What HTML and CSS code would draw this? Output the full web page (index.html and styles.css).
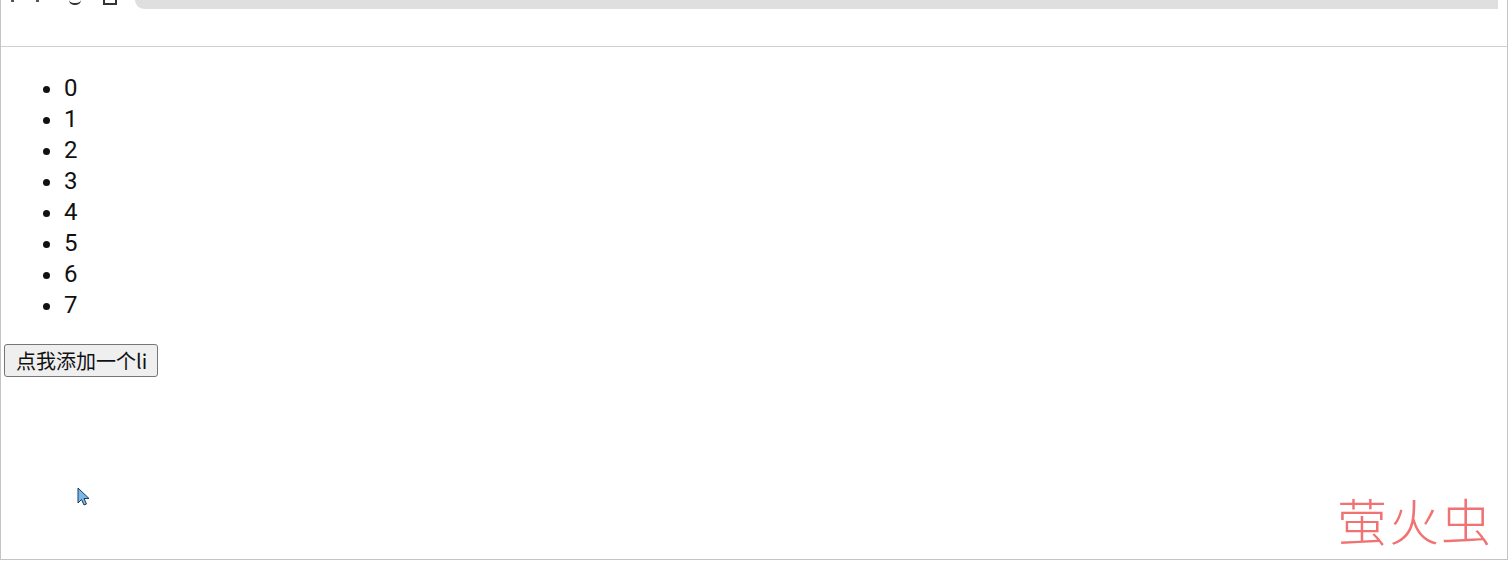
FILE: index.html
```html
<!DOCTYPE html>
<html lang="zh">

<head>
    <meta charset="UTF-8">
    <meta name="viewport" content="width=device-width, initial-scale=1.0">
    <title>添加li</title>
    <link rel="stylesheet" href="styles.css">
</head>

<body>
    <div class="window">
        <!-- barra del navegador, cortada arriba -->
        <div class="toolbar">
            <div class="nav-icons">
                <span class="dot"></span>
                <span class="dot"></span>
                <span class="reload"></span>
                <span class="square"></span>
            </div>
            <div class="address"></div>
        </div>

        <div class="page">
            <ul id="list">
                <li>0</li>
                <li>1</li>
                <li>2</li>
                <li>3</li>
                <li>4</li>
                <li>5</li>
                <li>6</li>
                <li>7</li>
            </ul>
            <button id="addBtn">点我添加一个li</button>
        </div>

        <svg class="cursor" width="14" height="20" viewBox="0 0 14 20">
            <path d="M1 1 L1 16 L4.5 12.5 L7 18 L9.5 17 L7 11.5 L12 11.5 Z" fill="#7ab8ea" stroke="#1d3b5a" stroke-width="1" stroke-linejoin="round" />
        </svg>

        <div class="watermark">萤火虫</div>
    </div>

    <script>
        document.getElementById('addBtn').addEventListener('click', function () {
            const list = document.getElementById('list');
            const li = document.createElement('li');
            li.textContent = list.children.length;
            list.appendChild(li);
        });
    </script>
</body>

</html>
```

FILE: styles.css
```css
body {
    margin: 0;
    padding: 0;
    background-color: white;
    font-family: "Noto Sans CJK SC", "Noto Sans", sans-serif;
}

.window {
    position: relative;
    height: 559px;
    width: 1506px;
    border-left: 1px solid #c4c4c4;
    border-right: 1px solid #c4c4c4;
    border-bottom: 1px solid #c4c4c4;
    overflow: hidden;
}

.toolbar {
    height: 46px;
    border-bottom: 1px solid #cfcfcf;
    display: flex;
    align-items: flex-start;
}

.nav-icons {
    width: 134px;
    display: flex;
    align-items: flex-start;
    gap: 22px;
    padding-left: 10px;
    box-sizing: border-box;
}

.dot {
    width: 3px;
    height: 2px;
    background-color: #555;
}

.reload {
    width: 12px;
    height: 3px;
    border-bottom: 2px solid #333;
    border-radius: 0 0 6px 6px;
    margin-left: 8px;
}

.square {
    width: 10px;
    height: 3px;
    border: 2px solid #333;
    border-top: none;
}

.address {
    flex: 1;
    height: 9px;
    background-color: #dfdfdf;
    border-radius: 0 0 0 12px;
    margin-right: 9px;
}

.page {
    padding: 26px 3px 0;
}

ul {
    margin: 0 0 23px;
    padding-left: 60px;
    font-family: Roboto, "Noto Sans", sans-serif;
    font-size: 24px;
    line-height: 31px;
    color: #111;
}

button {
    font-family: "Noto Sans CJK SC", sans-serif;
    font-size: 20px;
    line-height: 25px;
    padding: 3px 10px 3px 11px;
    color: #111;
    background-color: #efefef;
    border: 1px solid #767676;
    border-radius: 3px;
}

.cursor {
    position: absolute;
    left: 76px;
    top: 487px;
}

.watermark {
    position: absolute;
    right: 14px;
    bottom: 12px;
    font-size: 50px;
    font-weight: 300;
    line-height: 56px;
    color: #f07272;
    letter-spacing: 2px;
}
```
